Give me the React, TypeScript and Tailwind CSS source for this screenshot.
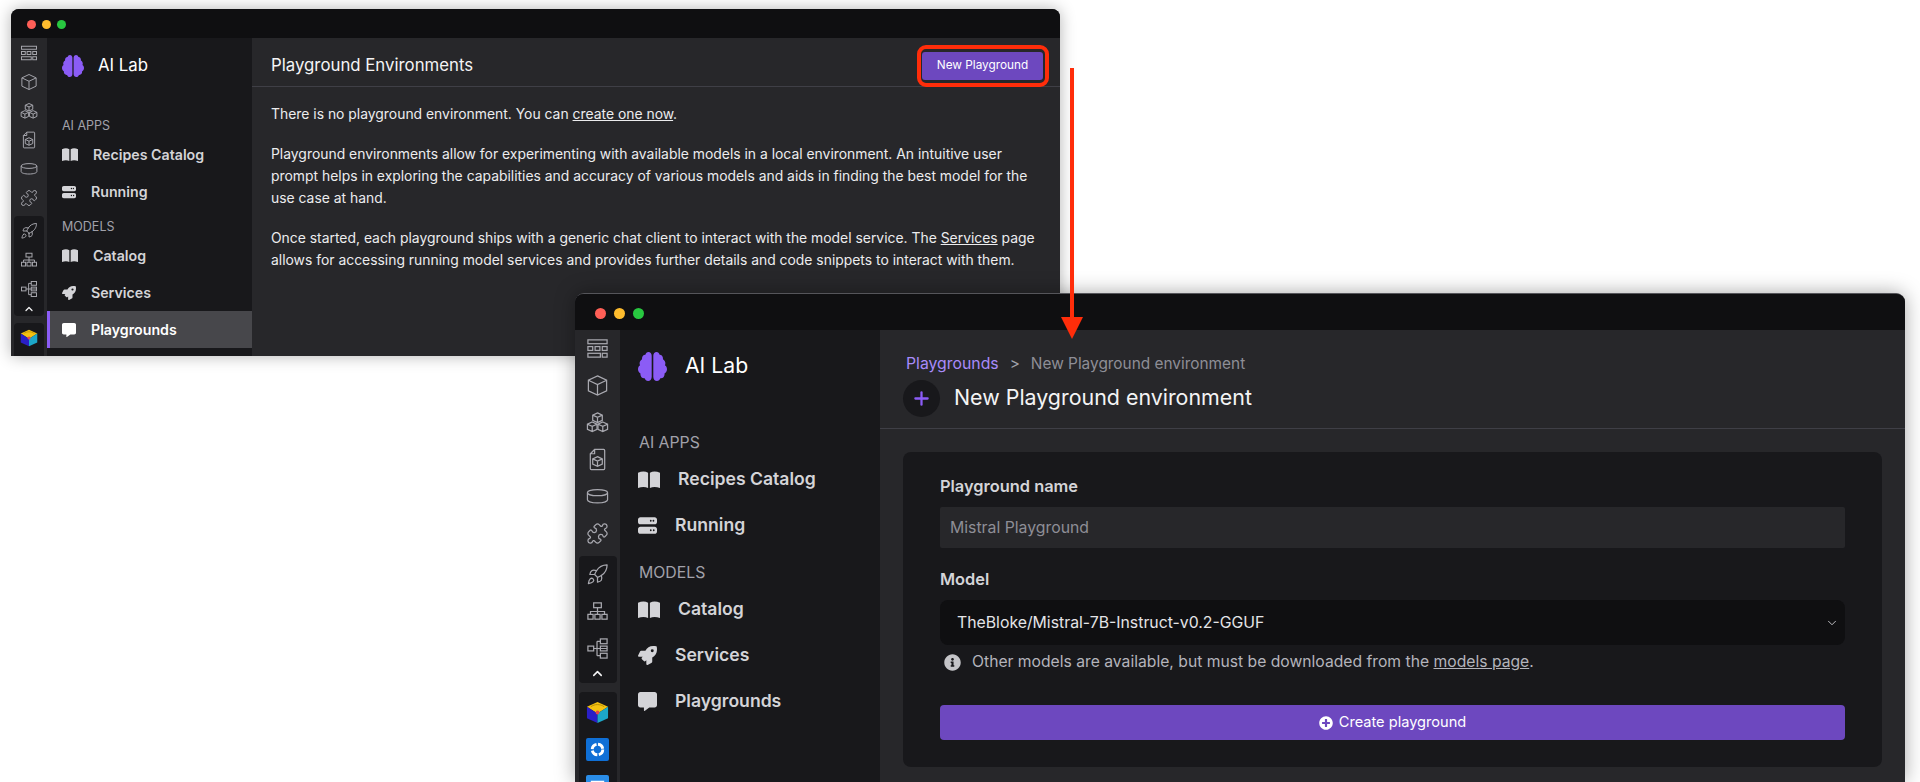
import React from 'react';
import { ChevronDown, ChevronUp, Plus, Puzzle, Rocket } from 'lucide-react';
import { FaBrain, FaCommentAlt, FaInfoCircle, FaPlusCircle, FaRocket } from 'react-icons/fa';
import { FaServer } from 'react-icons/fa6';

const sizes = {
  small: {
    rail: 'w-[36px]',
    railIcon: 'w-[18px] h-[18px]',
    railRow: 'h-[29px]',
    group: 'w-[30px] mt-[4px]',
    groupNext: 'w-[30px] mt-[7px]',
    chevron: 'w-[12px] h-[12px]',
    chevronRow: 'h-[11px] mb-[2px]',
    side: 'w-[205px]',
    logoRow: 'h-[54px] pt-[1px] pl-[15px] gap-[14px]',
    brain: 'w-[22px] h-[22px]',
    logoText: 'text-[16.8px]',
    label: 'pl-[15px] text-[12.5px]',
    firstLabel: 'h-[19px] mt-[25px]',
    nextLabel: 'h-[27px] pt-[8px]',
    item: 'h-[37px] gap-[15px] text-[14.2px]',
    itemPad: 'pl-[15px]',
    activePad: 'pl-[12px]',
    book: 'w-[16px] h-[13px]',
    square: 'w-[14px] h-[14px]',
  },
  large: {
    rail: 'w-[45px]',
    railIcon: 'w-[23px] h-[23px]',
    railRow: 'h-[37px]',
    group: 'w-[38px] mt-[4px]',
    groupNext: 'w-[38px] mt-[9px] pt-[2px]',
    chevron: 'w-[15px] h-[15px]',
    chevronRow: 'h-[13px] mb-[3px]',
    side: 'w-[260px]',
    logoRow: 'h-[71px] pt-[1px] pl-[18px] gap-[18px]',
    brain: 'w-[29px] h-[29px]',
    logoText: 'text-[21.2px]',
    label: 'pl-[19px] text-[15.8px]',
    firstLabel: 'h-[26px] mt-[29px]',
    nextLabel: 'h-[38px] pt-[11px]',
    item: 'h-[46px] gap-[18px] text-[17.6px]',
    itemPad: 'pl-[18px]',
    activePad: 'pl-[18px]',
    book: 'w-[22px] h-[17px]',
    square: 'w-[19px] h-[19px]',
  },
};

type Size = typeof sizes.small;

const smallCube = 'M0 0l5 2.3v5.4l-5 2.3-5-2.3V2.3z M-5 2.3l5 2.3 5-2.3 M0 4.6V10';

function Glyph({ className, children }: { className: string; children: React.ReactNode }) {
  return (
    <svg viewBox="0 0 24 24" fill="none" stroke="#a8a8af" strokeWidth="1.3" className={className}>
      {children}
    </svg>
  );
}

function BookIcon({ className }: { className: string }) {
  return (
    <svg viewBox="0 0 24 20" fill="currentColor" preserveAspectRatio="none" className={className}>
      <path d="M0 2c4-2 8-2 11 0v18c-3-1.5-7-1.5-11 0z" />
      <path d="M24 2c-4-2-8-2-11 0v18c3-1.5 7-1.5 11 0z" />
    </svg>
  );
}

function IconRail({ s, extra }: { s: Size; extra: boolean }) {
  const ic = s.railIcon;
  const row = `flex items-center justify-center shrink-0 ${s.railRow}`;
  return (
    <div className={`${s.rail} shrink-0 bg-[#27272a] flex flex-col items-center overflow-hidden`}>
      <div className={row}>
        <Glyph className={ic}>
          <rect x="2" y="3" width="20" height="4" />
          <rect x="2" y="10" width="5" height="4" />
          <rect x="9.5" y="10" width="5" height="4" />
          <rect x="17" y="10" width="5" height="4" />
          <rect x="2" y="17" width="13" height="4" />
          <rect x="17" y="17" width="5" height="4" />
        </Glyph>
      </div>
      <div className={row}>
        <Glyph className={ic}>
          <path d="M12 2l9.5 4.5v11L12 22l-9.5-4.5v-11z M2.5 6.5L12 11l9.5-4.5 M12 11v11" />
        </Glyph>
      </div>
      <div className={row}>
        <Glyph className={ic}>
          <path d={smallCube} transform="translate(12 2)" />
          <path d={smallCube} transform="translate(6.5 11.5)" />
          <path d={smallCube} transform="translate(17.5 11.5)" />
        </Glyph>
      </div>
      <div className={row}>
        <Glyph className={ic}>
          <path d="M9 1.5h9.5a1 1 0 0 1 1 1v19a1 1 0 0 1-1 1h-13a1 1 0 0 1-1-1V6z M9 1.5V6H4.5" />
          <path d={smallCube} transform="translate(12 9)" />
        </Glyph>
      </div>
      <div className={row}>
        <Glyph className={ic}>
          <ellipse cx="12" cy="8" rx="10.5" ry="3.2" />
          <path d="M1.5 8v7.5c0 1.8 4.7 3.2 10.5 3.2s10.5-1.4 10.5-3.2V8" />
        </Glyph>
      </div>
      <div className={row}>
        <Puzzle className={ic} stroke="#a8a8af" strokeWidth={1.3} />
      </div>
      <div className={`${s.group} shrink-0 bg-[#18181b] rounded-[4px] flex flex-col items-center`}>
        <div className={row}>
          <Rocket className={ic} stroke="#a8a8af" strokeWidth={1.3} />
        </div>
        <div className={row}>
          <Glyph className={ic}>
            <rect x="8" y="3" width="8" height="5" />
            <path d="M12 8v7 M4.7 15v-3h14.6v3" />
            <rect x="2" y="15" width="5.4" height="5" />
            <rect x="9.3" y="15" width="5.4" height="5" />
            <rect x="16.6" y="15" width="5.4" height="5" />
          </Glyph>
        </div>
        <div className={row}>
          <Glyph className={ic}>
            <rect x="2" y="9.5" width="6" height="5" />
            <path d="M8 12h14 M11.5 4.5v15" />
            <path d="M11.5 4.5H15 M11.5 19.5H15" />
            <rect x="15" y="2" width="7" height="5" />
            <rect x="15" y="9.5" width="7" height="5" />
            <rect x="15" y="17" width="7" height="5" />
          </Glyph>
        </div>
        <div className={`${s.chevronRow} shrink-0 flex items-center`}>
          <ChevronUp className={s.chevron} stroke="#f4f4f5" strokeWidth={2.5} />
        </div>
      </div>
      <div className={`${s.groupNext} shrink-0 bg-[#18181b] rounded-t-[4px] flex-1 flex flex-col items-center`}>
        <div className={row}>
          <svg viewBox="0 0 24 24" className={ic}>
            <path d="M12 1l11 5-11 7L1 6z" fill="#f5c211" />
            <path d="M1 6l11 7v10L1 18z" fill="#2a1fc7" />
            <path d="M23 6l-11 7v10l11-5z" fill="#1ca7c9" />
            <circle cx="12" cy="12" r="2" fill="#e5484d" />
            <path d="M5 6c4-3 10-3 14 0" fill="none" stroke="#a87f00" strokeWidth="0.8" />
          </svg>
        </div>
        {extra && (
          <>
            <div className={row}>
              <svg viewBox="0 0 24 24" className={ic}>
                <rect width="24" height="24" rx="2" fill="#0f6fd6" />
                <circle cx="12" cy="12" r="5.5" fill="none" stroke="#fff" strokeWidth="3" strokeDasharray="7 1.6" />
              </svg>
            </div>
            <div className={row}>
              <svg viewBox="0 0 24 24" className={ic}>
                <rect width="24" height="24" rx="2" fill="#2a8de8" />
                <rect x="5" y="6" width="14" height="3" fill="#fff" />
              </svg>
            </div>
          </>
        )}
      </div>
    </div>
  );
}

function NavItem({ s, icon, label, active }: { s: Size; icon: React.ReactNode; label: string; active?: boolean }) {
  return (
    <div
      className={`flex items-center font-semibold ${s.item} ${
        active ? `bg-[#47474b] border-l-[3px] border-[#8b5cf6] text-white ${s.activePad}` : `text-[#d4d4d8] ${s.itemPad}`
      }`}
    >
      {icon}
      <span>{label}</span>
    </div>
  );
}

function Sidebar({ s, active }: { s: Size; active: boolean }) {
  return (
    <div className={`${s.side} shrink-0 bg-[#18181b]`}>
      <div className={`flex items-center ${s.logoRow}`}>
        <FaBrain className={`${s.brain} text-[#8b5cf6]`} preserveAspectRatio="none" />
        <span className={`${s.logoText} text-white`}>AI Lab</span>
      </div>
      <div className={`${s.label} ${s.firstLabel} flex items-center text-[#a1a1aa]`}>AI APPS</div>
      <NavItem s={s} icon={<BookIcon className={s.book} />} label="Recipes Catalog" />
      <NavItem s={s} icon={<FaServer className={s.square} />} label="Running" />
      <div className={`${s.label} ${s.nextLabel} flex items-center text-[#a1a1aa]`}>MODELS</div>
      <NavItem s={s} icon={<BookIcon className={s.book} />} label="Catalog" />
      <NavItem s={s} icon={<FaRocket className={s.square} />} label="Services" />
      <NavItem s={s} icon={<FaCommentAlt className={s.square} />} label="Playgrounds" active={active} />
    </div>
  );
}

function Dots({ large }: { large?: boolean }) {
  const dot = large ? 'w-[11px] h-[11px] rounded-full' : 'w-[9px] h-[9px] rounded-full';
  return (
    <div className={`flex items-center shrink-0 bg-[#0f0f11] ${large ? 'h-[36px] pt-[3px] pl-[20px] gap-[8px]' : 'h-[29px] pt-[2px] pl-[16px] gap-[6px]'}`}>
      <span className={`${dot} bg-[#ff5f57]`} />
      <span className={`${dot} bg-[#febc2e]`} />
      <span className={`${dot} bg-[#28c840]`} />
    </div>
  );
}

function EmptyPlaygrounds() {
  return (
    <div className="flex-1 min-w-0 bg-[#27272a]">
      <div className="h-[49px] pt-[7px] flex items-center justify-between pl-[19px] pr-[17px] border-b border-[#3f3f46]">
        <h1 className="text-[16.8px] text-[#f4f4f5]">Playground Environments</h1>
        <button className="w-[121px] h-[28px] rounded-[3px] bg-[#6d48bf] text-white text-[11.8px]">New Playground</button>
      </div>
      <div className="pl-[19px] pr-[17px] pt-[16px] text-[13.9px] leading-[22px] text-[#ececee]">
        <p>
          There is no playground environment. You can <span className="underline">create one now</span>.
        </p>
        <p className="mt-[18px]">
          Playground environments allow for experimenting with available models in a local environment. An intuitive user
          prompt helps in exploring the capabilities and accuracy of various models and aids in finding the best model for the
          use case at hand.
        </p>
        <p className="mt-[18px]">
          Once started, each playground ships with a generic chat client to interact with the model service. The{' '}
          <span className="underline">Services</span> page allows for accessing running model services and provides further
          details and code snippets to interact with them.
        </p>
      </div>
    </div>
  );
}

function NewPlayground() {
  return (
    <div className="flex-1 min-w-0 bg-[#27272a]">
      <div className="h-[99px] border-b border-[#3f3f46] pl-[23px] pt-[23px]">
        <div className="pl-[3px] flex items-center text-[15.4px] h-[22px]">
          <span className="text-[#a78bfa] text-[15.8px]">Playgrounds</span>
          <span className="mx-[11px] text-[#a1a1aa]">&gt;</span>
          <span className="text-[#8e8e96]">New Playground environment</span>
        </div>
        <div className="flex items-center gap-[14px] mt-[5px]">
          <div className="w-[37px] h-[37px] rounded-full bg-[#18181b] flex items-center justify-center">
            <Plus className="w-[21px] h-[21px] text-[#8b5cf6]" strokeWidth={2.6} />
          </div>
          <h1 className="text-[21.4px] text-[#f4f4f5] -mt-[3px]">New Playground environment</h1>
        </div>
      </div>
      <div className="pl-[23px] pr-[23px] pt-[23px]">
        <div className="h-[315px] rounded-[8px] bg-[#18181b] pl-[37px] pr-[37px] pt-[23px]">
          <div className="h-[22px] flex items-center text-[16.4px] font-semibold text-[#d4d4d8]">Playground name</div>
          <div className="mt-[10px] h-[41px] rounded-[2px] bg-[#27272a] flex items-center pl-[10px] pt-[1px] text-[15.8px] text-[#8e8e96]">Mistral Playground</div>
          <div className="mt-[20px] h-[22px] flex items-center text-[16.4px] font-semibold text-[#d4d4d8]">Model</div>
          <div className="mt-[10px] h-[45px] rounded-[8px] bg-[#0f0f11] flex items-center justify-between pl-[17px] pr-[6px] text-[15.8px] text-[#e4e4e7]">
            <span>TheBloke/Mistral-7B-Instruct-v0.2-GGUF</span>
            <ChevronDown className="w-[14px] h-[14px] text-[#d4d4d8]" strokeWidth={1.5} />
          </div>
          <div className="mt-[6px] h-[22px] flex items-center pl-[4px] gap-[11px] text-[15.7px] text-[#b4b4bb]">
            <FaInfoCircle className="w-[17px] h-[17px] text-[#c4c4c8]" />
            <span>
              Other models are available, but must be downloaded from the <span className="underline">models page</span>.
            </span>
          </div>
          <button className="mt-[32px] w-full h-[35px] rounded-[4px] bg-[#6d48bf] text-white text-[14.6px] flex items-center justify-center gap-[6px]">
            <FaPlusCircle className="w-[14px] h-[14px]" />
            <span>Create playground</span>
          </button>
        </div>
      </div>
    </div>
  );
}

export default function App() {
  return (
    <div
      className="relative w-[1920px] h-[782px] overflow-hidden bg-white"
      style={{ fontFamily: 'Inter, "Noto Sans", sans-serif' }}
    >
      <div className="absolute left-[11px] top-[9px] w-[1049px] h-[347px] rounded-t-[8px] overflow-hidden flex flex-col shadow-[0_0_16px_rgba(0,0,0,0.3)] bg-[#27272a]">
        <Dots />
        <div className="flex flex-1 min-h-0">
          <IconRail s={sizes.small} extra={false} />
          <Sidebar s={sizes.small} active />
          <EmptyPlaygrounds />
        </div>
      </div>
      <div className="absolute left-[917px] top-[45px] w-[132px] h-[42px] rounded-[9px] border-[4px] border-[#ff2d0a]" />

      <div className="absolute left-[575px] top-[293px] w-[1330px] h-[489px] rounded-t-[9px] overflow-hidden flex flex-col shadow-[0_0_20px_rgba(0,0,0,0.35)] bg-[#27272a] border-t border-[#55555a]">
        <Dots large />
        <div className="flex flex-1 min-h-0">
          <IconRail s={sizes.large} extra />
          <Sidebar s={sizes.large} active={false} />
          <NewPlayground />
        </div>
      </div>

      <div className="absolute left-[1070px] top-[68px] w-[4px] h-[250px] bg-[#ff2d0a]" />
      <svg viewBox="0 0 22 22" className="absolute left-[1061px] top-[317px] w-[22px] h-[22px]">
        <path d="M0 0h22L11 22z" fill="#ff2d0a" />
      </svg>
    </div>
  );
}
